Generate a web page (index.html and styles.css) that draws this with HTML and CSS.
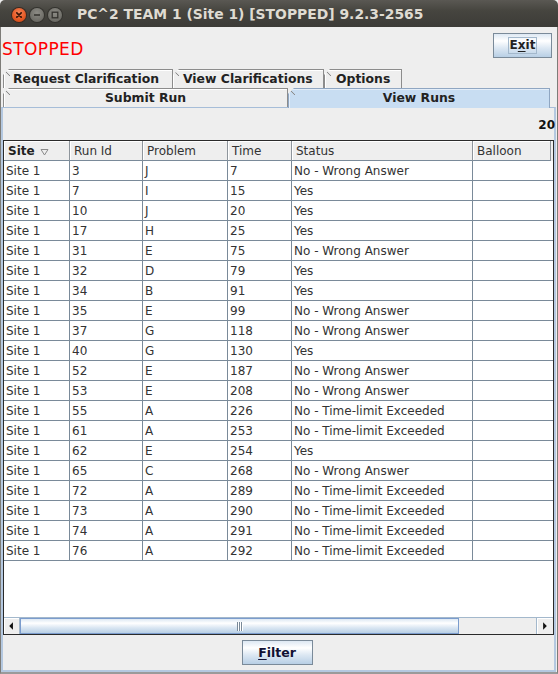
FILE: index.html
```html
<!DOCTYPE html>
<html>
<head>
<meta charset="utf-8">
<title>PC^2 TEAM 1</title>
<link rel="stylesheet" href="styles.css">
</head>
<body>
<div class="window">
  <header class="titlebar">
    <div class="wbtns">
      <span class="wb wb-close"><svg width="14" height="14" viewBox="0 0 14 14"><path d="M4.8 4.8L9.2 9.2M9.2 4.8L4.8 9.2" stroke="#3a1608" stroke-width="1.7" stroke-linecap="round"/></svg></span>
      <span class="wb wb-min"><svg width="14" height="14" viewBox="0 0 14 14"><path d="M4 7H10" stroke="#33322e" stroke-width="1.5"/></svg></span>
      <span class="wb wb-max"><svg width="14" height="14" viewBox="0 0 14 14"><rect x="4.2" y="4.2" width="5.6" height="5.6" fill="none" stroke="#33322e" stroke-width="1.3"/></svg></span>
    </div>
    <div class="title">PC^2 TEAM 1 (Site 1) [STOPPED] 9.2.3-2565</div>
  </header>

  <div class="content">
    <div class="topbar">
      <span class="status">STOPPED</span>
      <button class="btn btn-exit"><span class="focus">E<u>x</u>it</span></button>
    </div>

    <div class="tabs">
      <div class="tabrow">
        <div class="tab t-req">Request Clarification</div>
        <div class="tab t-viewclar">View Clarifications</div>
        <div class="tab t-opt">Options</div>
      </div>
      <div class="tabrow">
        <div class="tab t-submit">Submit Run</div>
        <div class="tab t-runs selected">View Runs</div>
      </div>
    </div>

    <div class="panel">
      <div class="count">20</div>
      <div class="scrollpane">
        <div class="viewport">
          <div class="trow thead">
            <div class="th th-site">Site <svg class="sort" width="9" height="8" viewBox="0 0 9 8"><path d="M1 1.5H8L4.5 7Z" fill="none" stroke="#8a8a8a" stroke-width="1"/></svg></div>
            <div class="th">Run Id</div>
            <div class="th">Problem</div>
            <div class="th">Time</div>
            <div class="th">Status</div>
            <div class="th th-last">Balloon</div>
          </div>
          <div class="trow"><div class="td">Site 1</div><div class="td">3</div><div class="td">J</div><div class="td">7</div><div class="td">No - Wrong Answer</div><div class="td td-last"></div></div>
          <div class="trow"><div class="td">Site 1</div><div class="td">7</div><div class="td">I</div><div class="td">15</div><div class="td">Yes</div><div class="td td-last"></div></div>
          <div class="trow"><div class="td">Site 1</div><div class="td">10</div><div class="td">J</div><div class="td">20</div><div class="td">Yes</div><div class="td td-last"></div></div>
          <div class="trow"><div class="td">Site 1</div><div class="td">17</div><div class="td">H</div><div class="td">25</div><div class="td">Yes</div><div class="td td-last"></div></div>
          <div class="trow"><div class="td">Site 1</div><div class="td">31</div><div class="td">E</div><div class="td">75</div><div class="td">No - Wrong Answer</div><div class="td td-last"></div></div>
          <div class="trow"><div class="td">Site 1</div><div class="td">32</div><div class="td">D</div><div class="td">79</div><div class="td">Yes</div><div class="td td-last"></div></div>
          <div class="trow"><div class="td">Site 1</div><div class="td">34</div><div class="td">B</div><div class="td">91</div><div class="td">Yes</div><div class="td td-last"></div></div>
          <div class="trow"><div class="td">Site 1</div><div class="td">35</div><div class="td">E</div><div class="td">99</div><div class="td">No - Wrong Answer</div><div class="td td-last"></div></div>
          <div class="trow"><div class="td">Site 1</div><div class="td">37</div><div class="td">G</div><div class="td">118</div><div class="td">No - Wrong Answer</div><div class="td td-last"></div></div>
          <div class="trow"><div class="td">Site 1</div><div class="td">40</div><div class="td">G</div><div class="td">130</div><div class="td">Yes</div><div class="td td-last"></div></div>
          <div class="trow"><div class="td">Site 1</div><div class="td">52</div><div class="td">E</div><div class="td">187</div><div class="td">No - Wrong Answer</div><div class="td td-last"></div></div>
          <div class="trow"><div class="td">Site 1</div><div class="td">53</div><div class="td">E</div><div class="td">208</div><div class="td">No - Wrong Answer</div><div class="td td-last"></div></div>
          <div class="trow"><div class="td">Site 1</div><div class="td">55</div><div class="td">A</div><div class="td">226</div><div class="td">No - Time-limit Exceeded</div><div class="td td-last"></div></div>
          <div class="trow"><div class="td">Site 1</div><div class="td">61</div><div class="td">A</div><div class="td">253</div><div class="td">No - Time-limit Exceeded</div><div class="td td-last"></div></div>
          <div class="trow"><div class="td">Site 1</div><div class="td">62</div><div class="td">E</div><div class="td">254</div><div class="td">Yes</div><div class="td td-last"></div></div>
          <div class="trow"><div class="td">Site 1</div><div class="td">65</div><div class="td">C</div><div class="td">268</div><div class="td">No - Wrong Answer</div><div class="td td-last"></div></div>
          <div class="trow"><div class="td">Site 1</div><div class="td">72</div><div class="td">A</div><div class="td">289</div><div class="td">No - Time-limit Exceeded</div><div class="td td-last"></div></div>
          <div class="trow"><div class="td">Site 1</div><div class="td">73</div><div class="td">A</div><div class="td">290</div><div class="td">No - Time-limit Exceeded</div><div class="td td-last"></div></div>
          <div class="trow"><div class="td">Site 1</div><div class="td">74</div><div class="td">A</div><div class="td">291</div><div class="td">No - Time-limit Exceeded</div><div class="td td-last"></div></div>
          <div class="trow"><div class="td">Site 1</div><div class="td">76</div><div class="td">A</div><div class="td">292</div><div class="td">No - Time-limit Exceeded</div><div class="td td-last"></div></div>
        </div>
        <div class="hscroll">
          <span class="sb-btn"><svg width="16" height="16" viewBox="0 0 16 16"><path d="M5.5 8L9.5 4V12Z" fill="#111"/></svg></span>
          <span class="sb-track"><span class="sb-thumb"><span class="grip"></span></span></span>
          <span class="sb-btn sb-right"><svg width="16" height="16" viewBox="0 0 16 16"><path d="M10.5 8L6.5 4V12Z" fill="#111"/></svg></span>
        </div>
      </div>
      <div class="actions">
        <button class="btn btn-filter"><u>F</u>ilter</button>
      </div>
    </div>
  </div>
</div>
</body>
</html>
```

FILE: styles.css
```css
* { box-sizing: border-box; }

html, body {
  margin: 0;
  padding: 0;
  background: #eeeeee;
}

body {
  width: 558px;
  height: 674px;
  overflow: hidden;
  font-family: "DejaVu Sans", sans-serif;
}

.window {
  width: 558px;
  height: 674px;
  display: flex;
  flex-direction: column;
  background: #eeeeee;
}

/* ---------- title bar ---------- */
.titlebar {
  height: 27px;
  flex: none;
  display: flex;
  align-items: center;
  padding-top: 2px;
  background: linear-gradient(to bottom, #5a5853 0%, #46453f 40%, #3c3b37 100%);
  border-radius: 5px 5px 0 0;
}

.wbtns {
  display: flex;
  gap: 4px;
  padding-left: 12px;
}

.wb {
  width: 14px;
  height: 14px;
  border-radius: 50%;
  display: flex;
}

.wb-close {
  background: radial-gradient(circle at 50% 35%, #f5865a 0%, #e65a26 55%, #c9430f 100%);
  box-shadow: 0 0 0 1px #3a2a22;
}

.wb-min, .wb-max {
  background: radial-gradient(circle at 50% 35%, #8c8b85 0%, #74736d 55%, #5d5c57 100%);
  box-shadow: 0 0 0 1px #33322e;
}

.title {
  margin-left: 15px;
  margin-top: -2px;
  color: #dfdbd2;
  font-family: "DejaVu Sans", sans-serif;
  font-weight: 700;
  font-size: 13.9px;
  white-space: nowrap;
}

/* ---------- content ---------- */
.content {
  flex: 1;
  display: flex;
  flex-direction: column;
  border-left: 1px solid #7d7c78;
  border-right: 1px solid #7d7c78;
  border-bottom: 2px solid #9a9a9a;
}

.topbar {
  height: 42px;
  flex: none;
  display: flex;
  justify-content: space-between;
  align-items: flex-start;
  padding: 0 5px 0 1px;
}

.status {
  margin-top: 12px;
  color: #ff0000;
  font-size: 17px;
  line-height: 20px;
  letter-spacing: 0.4px;
}

.btn {
  font-family: "DejaVu Sans", sans-serif;
  font-weight: 700;
  font-size: 12px;
  color: #222;
  border: 1px solid #7a8a99;
  background: linear-gradient(to bottom, #dde8f3 0%, #ffffff 30%, #dde8f3 60%, #b8cfe5 100%);
  padding: 0;
  margin: 0;
  display: flex;
  align-items: center;
  justify-content: center;
}

.btn u { text-decoration: underline; text-underline-offset: 2px; }

.btn-exit {
  margin-top: 6px;
  width: 59px;
  height: 25px;
}

.focus {
  border: 1px solid #a3b8cc;
  padding: 0 1px;
  height: 17px;
  line-height: 15px;
}

/* ---------- tabs ---------- */
.tabs {
  flex: none;
  padding-left: 2px;
}

.tabrow {
  display: flex;
  height: 19px;
}

.tab {
  position: relative;
  height: 19px;
  background: #eeeeee;
  border-top: 1px solid #8c8c8c;
  border-left: 1px solid #8c8c8c;
  border-right: 1px solid #8c8c8c;
  clip-path: polygon(0 6px, 6px 0, 100% 0, 100% 100%, 0 100%);
  font-weight: 700;
  font-size: 12.4px;
  line-height: 18px;
  color: #222;
  white-space: nowrap;
  box-shadow: inset 1px 1px 0 #ffffff;
}

.tab::before {
  content: "";
  position: absolute;
  left: -1px;
  top: -1px;
  width: 7px;
  height: 7px;
  background: linear-gradient(to top right, transparent calc(50% - 0.8px), #8c8c8c 50%, transparent calc(50% + 0.8px));
}

.t-req { width: 170px; padding-left: 9px; }
.t-viewclar { width: 151px; padding-left: 10px; border-left: none; }
.t-opt { width: 78px; padding-left: 11px; border-left: 1px solid #8c8c8c; }

.t-submit { width: 285px; text-align: center; }
.t-runs { width: 262px; text-align: center; }

.tab.selected {
  background: #c8ddf2;
  height: 20px;
  z-index: 1;
  border-color: #8fa6c2;
  box-shadow: inset 1px 1px 0 #e4eef9;
}

/* ---------- panel ---------- */
.panel {
  flex: 1;
  margin-right: 1px;
  border-top: 1px solid #a6bdd8;
  border-left: 2px solid #b4c8e0;
  border-right: 2px solid #b4c8e0;
  border-bottom: 2px solid #b4c8e0;
  display: flex;
  flex-direction: column;
}

.count {
  height: 32px;
  flex: none;
  text-align: right;
  font-weight: 700;
  font-size: 12px;
  line-height: 35px;
  color: #111;
  margin-right: -1px;
}

.scrollpane {
  height: 495px;
  flex: none;
  border: 1px solid #2a2a2a;
  background: #ffffff;
  display: flex;
  flex-direction: column;
}

.viewport {
  flex: 1;
  overflow: hidden;
  background: #ffffff;
}

.trow {
  display: grid;
  grid-template-columns: 66px 73px 85px 64px 181px 120px;
  height: 20px;
}

.td, .th {
  height: 20px;
  border-right: 1px solid #7a8a99;
  border-bottom: 1px solid #7a8a99;
  white-space: nowrap;
  overflow: hidden;
}

.td {
  padding-left: 2px;
  font-size: 12px;
  line-height: 21px;
  color: #333;
}

.td-last { border-right: none; }

.thead { background: #eeeeee; }

.th {
  padding-left: 4px;
  padding-top: 2px;
  font-size: 12px;
  line-height: 17px;
  color: #333;
  border-right-color: #8e959c;
  border-bottom-color: #7a8a99;
  box-shadow: inset 1px 1px 0 #ffffff;
  display: flex;
  align-items: center;
}

.th-site { font-weight: 700; color: #222; }
.th-last { width: 78px; }

.sort { margin-left: 5px; margin-top: 1px; }

/* ---------- scrollbar ---------- */
.hscroll {
  height: 17px;
  flex: none;
  display: flex;
  background: #eeeeee;
  border-top: 1px solid #a3b8cc;
}

.sb-btn {
  width: 16px;
  height: 16px;
  flex: none;
  display: flex;
  background: #eeeeee;
  border-right: 1px solid #a3b8cc;
  box-shadow: inset 1px 1px 0 #ffffff;
}

.sb-right {
  border-right: none;
  border-left: 1px solid #a3b8cc;
  margin-right: 1px;
}

.sb-track {
  flex: 1;
  display: flex;
}

.sb-thumb {
  width: 439px;
  height: 16px;
  border: 1px solid #7b9ccd;
  background: linear-gradient(to bottom, #dde8f3 0%, #ffffff 30%, #dde8f3 60%, #b8cfe5 100%);
  display: flex;
  align-items: center;
  justify-content: center;
}

.grip {
  width: 6px;
  height: 9px;
  background: repeating-linear-gradient(to right, #7a8a99 0px, #7a8a99 1px, #ffffff 1px, #ffffff 2px);
}

/* ---------- actions ---------- */
.actions {
  display: flex;
  justify-content: center;
  padding-top: 5px;
}

.btn-filter {
  width: 71px;
  height: 25px;
  font-size: 12.5px;
  color: #111133;
  margin-left: -3px;
}
```
